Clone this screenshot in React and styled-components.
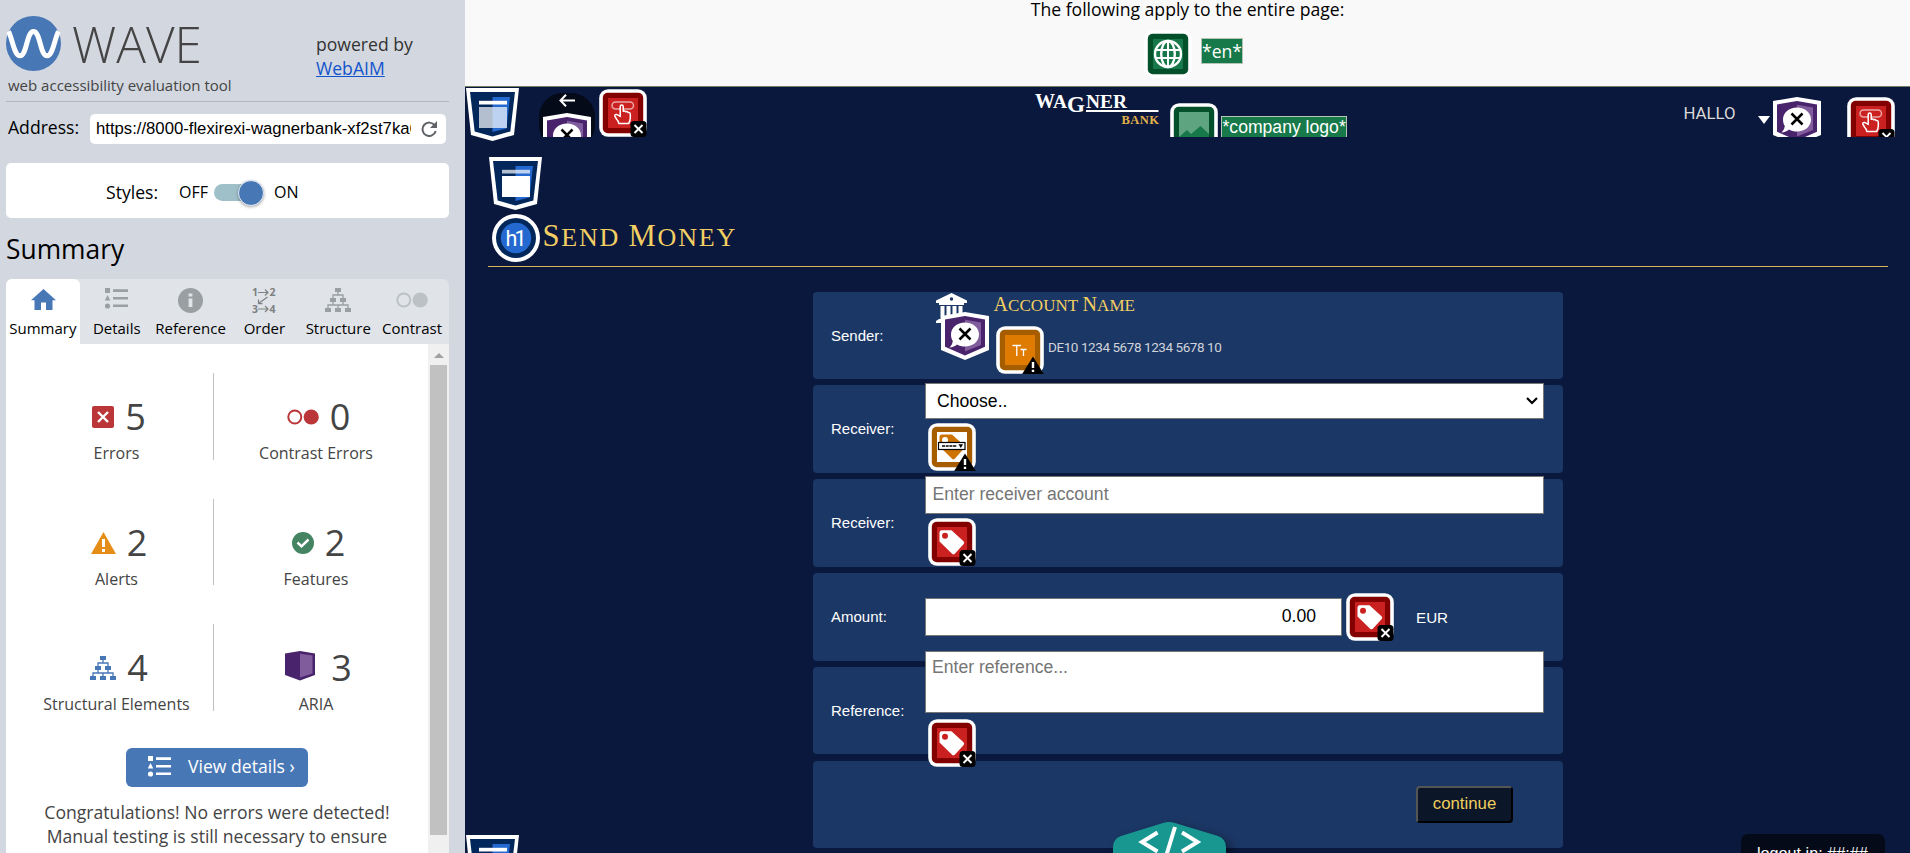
import React from 'react';
import styled, { createGlobalStyle, css } from 'styled-components';

const Global = createGlobalStyle`
  * { box-sizing: border-box; }
  body { margin: 0; overflow: hidden; background: #09183c; }
  h1, h2, p { margin: 0; font-weight: 400; }
  svg { display: block; flex: none; }
`;

const openSans = "'Open Sans', 'Noto Sans', sans-serif";
const arial = "'Liberation Sans', Arial, sans-serif";

const Page = styled.div`
  display: flex;
  height: 853px;
  overflow: hidden;
`;

/* ---------- sidebar ---------- */

const Sidebar = styled.aside`
  width: 465px;
  flex: none;
  padding: 0 16px 0 6px;
  background: #d3d8e0;
  font-family: ${openSans};
  display: flex;
  flex-direction: column;
`;
const BrandHeader = styled.header`
  display: flex;
  height: 102px;
  padding-top: 16px;
  border-bottom: 1px solid #b1b7bd;
`;
const Brand = styled.div`
  width: 310px;
`;
const BrandRow = styled.div`
  display: flex;
  gap: 11px;
  height: 55px;
`;
const BrandName = styled.span`
  font-size: 49.5px;
  font-weight: 300;
  line-height: 56px;
  color: #444;
`;
const Tagline = styled.div`
  padding-left: 2px;
  font-size: 15px;
  line-height: 28px;
  color: #444;
  white-space: nowrap;
`;
const Powered = styled.div`
  padding-top: 16px;
  font-size: 17.6px;
  line-height: 24px;
  color: #333;
  white-space: nowrap;
  a { display: block; color: #1254cc; text-decoration: underline; }
`;
const AddressRow = styled.div`
  display: flex;
  padding: 12px 3px 19px 2px;
`;
const AddressLabel = styled.label`
  width: 82px;
  font-size: 17.6px;
  line-height: 26px;
  color: #000;
`;
const AddressBox = styled.div`
  width: 356px;
  height: 30px;
  padding: 0 9px 0 6px;
  border-radius: 5px;
  background: #fff;
  display: flex;
  align-items: center;
  justify-content: space-between;
`;
const AddressText = styled.span`
  width: 315px;
  overflow: hidden;
  white-space: nowrap;
  font: 16.7px/28px ${arial};
`;
const StylesCard = styled.div`
  display: flex;
  align-items: center;
  height: 55px;
  flex: none;
  padding: 2px 0 0 100px;
  border-radius: 5px;
  background: #fff;
  font-size: 16px;
`;
const StylesLabel = styled.span`
  width: 73px;
  font-size: 17.6px;
`;
const Track = styled.span`
  display: flex;
  align-items: center;
  justify-content: flex-end;
  width: 50px;
  height: 17px;
  margin: 2px 10px 0 6px;
  border-radius: 9px;
  background: #9fc0c9;
`;
const Knob = styled.span`
  width: 26px;
  height: 26px;
  flex: none;
  border-radius: 50%;
  border: 1px solid #e8eef6;
  background: #4877b6;
  box-shadow: 0 1px 3px rgba(0, 0, 0, 0.35);
`;
const SectionTitle = styled.h2`
  margin: 13px 0 12px;
  font-size: 26.4px;
  line-height: 36px;
`;
const Tabs = styled.nav`
  display: grid;
  grid-template-columns: repeat(6, 1fr);
  height: 65px;
  flex: none;
  border-radius: 6px 6px 0 0;
  background: #e0e4e8;
`;
const Tab = styled.div`
  display: flex;
  flex-direction: column;
  align-items: center;
  padding-top: 8px;
  border-radius: 6px 6px 0 0;
  background: ${(p) => (p.$active ? '#fff' : 'transparent')};
  font-size: 15px;
  line-height: 20px;
  white-space: nowrap;
`;
const TabIcon = styled.div`
  display: flex;
  align-items: center;
  height: 26px;
  margin-bottom: 5px;
`;
const Panel = styled.div`
  display: flex;
  flex: 1;
  min-height: 0;
  overflow: hidden;
`;
const PanelBody = styled.div`
  width: 422px;
  padding-top: 29px;
  background: #fff;
  display: flex;
  flex-direction: column;
  align-items: center;
  color: #444;
`;
const StatRow = styled.div`
  display: grid;
  grid-template-columns: 194px 204px;
  grid-template-rows: 86.5px;
  width: 398px;
  height: 86.5px;
  margin: 0 0 39px 4px;
  flex: none;
  &:nth-child(3) { margin-bottom: 37px; }
`;
const Stat = styled.div`
  display: flex;
  flex-direction: column;
  align-items: center;
  padding-top: 24px;
  ${(p) => p.$divided && css`border-right: 1px solid #c0c0c0;`}
`;
const StatTop = styled.div`
  display: flex;
  flex: none;
  align-items: center;
  gap: ${(p) => p.$gap}px;
  height: 40px;
  padding-left: 5px;
  margin-bottom: 5px;
  font-size: 36px;
  line-height: 40px;
`;
const StatLabel = styled.div`
  font-size: 16px;
  line-height: 22px;
  white-space: nowrap;
`;
const DetailsButton = styled.button`
  display: flex;
  align-items: center;
  width: 182px;
  height: 39px;
  flex: none;
  padding: 0 0 2px 22px;
  gap: 17px;
  border: 0;
  border-radius: 6px;
  background: #4877b6;
  color: #fff;
  font: 17.6px ${openSans};
  white-space: nowrap;
`;
const Verdict = styled.p`
  width: 380px;
  margin-top: 13px;
  font-size: 17.6px;
  line-height: 24px;
  text-align: center;
`;
const Scrollbar = styled.div`
  width: 21px;
  background: #f0f0f0;
  display: flex;
  flex-direction: column;
  align-items: center;
`;
const ScrollArrow = styled.div`
  margin: 9px 0 7px;
  border: 5px solid transparent;
  border-top: 0;
  border-bottom-color: #a0a0a0;
`;
const ScrollThumb = styled.div`
  width: 17px;
  height: 470px;
  background: #c1c1c1;
`;

/* ---------- evaluated page ---------- */

const Main = styled.main`
  flex: 1;
  min-width: 0;
  background: #09183c;
  color: #fff;
  font-family: ${arial};
  position: relative;
`;
const Notice = styled.section`
  height: 87px;
  border-bottom: 1px solid #6f7d68;
  background: #f9f9f9;
  color: #000;
  font: 17.6px/24px ${openSans};
  text-align: center;
`;
const NoticeText = styled.div`
  height: 30px;
  line-height: 19px;
`;
const NoticeIcons = styled.div`
  display: flex;
  justify-content: center;
  gap: 9px;
  padding-left: 12px;
`;
const AltTag = styled.span`
  height: ${(p) => p.$h}px;
  padding: 0 ${(p) => p.$px}px;
  border: 1px solid #b4c4b6;
  background: #17794a;
  color: #fff;
  white-space: nowrap;
  font: 17.6px/${(p) => p.$lh}px ${(p) => p.$family};
  margin-top: ${(p) => p.$top}px;
`;
const BankHeader = styled.header`
  display: flex;
  height: 70px;
  padding-left: 1px;
`;
const HeaderClip = styled.div`
  display: flex;
  flex: 1;
  height: 50px;
  overflow: hidden;
  align-items: flex-start;
`;
const BackPill = styled.div`
  position: relative;
  width: 56px;
  height: 56px;
  margin: 6px 4px 0 20px;
  padding-top: 1px;
  border-radius: 24px;
  background: #040a17;
  display: flex;
  justify-content: center;
`;
const BackShield = styled.div`
  position: absolute;
  left: 3.5px;
  top: 20px;
`;
const RedSlot = styled.div`
  margin: ${(p) => p.$m};
`;
const Greeting = styled.span`
  margin: 14px 21px 0 auto;
  width: 53px;
  font: 16.8px/24px Roboto, sans-serif;
  color: #d9d9d9;
`;
const Caret = styled.span`
  margin: 29px 3px 0 0;
  border: 6.5px solid transparent;
  border-top: 8px solid #fff;
  border-bottom: 0;
`;
const Content = styled.section`
  padding: 0 22px 0 23px;
`;
const TitleBar = styled.div`
  display: flex;
  gap: 2.5px;
  height: 57px;
  padding: 4px 0 0 4px;
  border-bottom: 1px solid #d9b452;
`;
const DisplayText = styled.span`
  font-family: 'Liberation Serif', serif;
  text-transform: uppercase;
  color: #f3cf63;
  white-space: pre;
  font-size: ${(p) => p.$size}px;
  letter-spacing: ${(p) => p.$track}px;
  line-height: ${(p) => p.$lh}px;
`;
const Word = styled.span`
  display: inline-block;
  &::first-letter { font-size: 1.18em; }
`;
const Form = styled.div`
  width: 750px;
  margin: 24.6px auto 0;
  display: flex;
  flex-direction: column;
  gap: 6.2px;
`;
const Row = styled.div`
  display: flex;
  height: 87.6px;
  padding: 0 19px 0 18px;
  border-radius: 4px;
  background: #1b3765;
`;
const RowLabel = styled.label`
  width: 94px;
  flex: none;
  font-size: 15px;
  line-height: 87px;
`;
const Field = styled.div`
  display: flex;
  flex-direction: ${(p) => (p.$inline ? 'row' : 'column')};
  width: 619px;
  margin-top: ${(p) => p.$top}px;
`;
const Control = styled.div`
  position: relative;
  z-index: 1;
  display: flex;
  flex: none;
  align-items: flex-start;
  justify-content: ${(p) => (p.$right ? 'flex-end' : 'space-between')};
  width: ${(p) => p.$w || 619}px;
  height: ${(p) => p.$h}px;
  margin-top: ${(p) => p.$drop || 0}px;
  padding: ${(p) => p.$pad};
  border: 1px solid #767676;
  background: #fff;
  color: ${(p) => (p.$hint ? '#757575' : '#000')};
  font-size: 17.6px;
  line-height: 22px;
`;
const MarkSlot = styled.div`
  position: relative;
  z-index: 1;
  height: 48px;
  margin: ${(p) => p.$m};
`;
const Currency = styled.span`
  font-size: 15.2px;
  line-height: 49px;
`;
const Sender = styled.div`
  display: flex;
  gap: 4px;
  padding-left: 10.5px;
`;
const BankMark = styled.div`
  position: relative;
  width: 54px;
  padding-top: 1px;
`;
const BankShield = styled.div`
  position: absolute;
  left: 5px;
  top: 20.5px;
`;
const AccountInfo = styled.div`
  display: flex;
  flex-direction: column;
`;
const IbanRow = styled.div`
  display: flex;
  gap: 4px;
  padding-left: 2.5px;
  margin-top: 8px;
`;
const Iban = styled.span`
  font: 13.5px/41px Roboto, sans-serif;
  padding-top: 1px;
  letter-spacing: -0.43px;
  color: #d0d3d9;
  white-space: nowrap;
`;
const SubmitButton = styled.button`
  width: 97px;
  height: 37px;
  margin: 25px 31px 0 auto;
  padding: 0 0 1px;
  border: 2px solid;
  border-color: #555 #000 #000 #555;
  border-radius: 4px;
  background: #0b1628;
  color: #f0cd5f;
  font: 16.8px ${arial};
`;
const Floating = styled.div`
  position: absolute;
  z-index: 2;
  left: ${(p) => p.$x}px;
  top: ${(p) => p.$y}px;
`;
const LogoutTimer = styled(Floating)`
  width: 144px;
  height: 50px;
  padding: 9px 0 0 16px;
  border-radius: 7px;
  background: #040a17;
  font-size: 16.2px;
  line-height: 20px;
  white-space: nowrap;
`;

/* ---------- icons ---------- */

const WaveLogo = () => (
  <svg width="55" height="55" viewBox="0 0 55 55">
    <circle cx="27.5" cy="27.5" r="27.5" fill="#4877b6" />
    <path d="M2.5 15.5C6 21 8 39.8 14 39.8C21 39.8 20.500 15.500 27.500 15.500C34.500 15.500 34 39.800 41 39.800C47 39.800 49 21 52.500 15.500" fill="none" stroke="#fff" strokeWidth="5" />
  </svg>
);
const Reload = () => (
  <svg width="16" height="16" viewBox="0 0 16 16">
    <path d="M13.800 4.600A6.700 6.700 0 1 0 14.700 10" fill="none" stroke="#5f6368" strokeWidth="2" />
    <path d="M16 0V7H9Z" fill="#5f6368" />
  </svg>
);
const Home = () => (
  <svg width="25" height="21" viewBox="0 0 25 21" style={{ marginLeft: 1, marginTop: -2 }}>
    <path d="M12.500 0L25 11.300H21.500V21H15V13.500H10V21H3.500V11.300H0Z" fill="#4877b6" />
  </svg>
);
const ListIcon = ({ color, y = 0 }) => (
  <svg width="23" height="21" viewBox="0 0 23 21" style={{ marginTop: y }}>
    <g fill={color}>
      <path d="M0 0h5v5H0zM2.500 7L5.300 12.500H-.3Z" />
      <circle cx="2.500" cy="18" r="2.600" />
      <path d="M8 1.300h15v2.600H8zM8 9h15v2.600H8zM8 16.400h15v2.600H8z" />
    </g>
  </svg>
);
const Info = () => (
  <svg width="25" height="25" viewBox="0 0 25 25">
    <circle cx="12.500" cy="12.500" r="12.500" fill="#9a9fa2" />
    <path d="M10.600 5.500h3.800v3h-3.800zM10.600 10.500h3.800v8.500h-3.800z" fill="#e0e4e8" />
  </svg>
);
const Order = () => (
  <svg width="24" height="25" viewBox="0 0 24 25">
    <g fill="#7d8183" fontFamily={openSans} fontWeight="700" fontSize="10.500">
      <text x="0" y="8">1</text><text x="17.500" y="8">2</text>
      <text x="0" y="24.500">3</text><text x="17.500" y="24.500">4</text>
    </g>
    <path d="M6 4.500H16M13 1.500L16 4.500L13 7.500M6 21H16M13 18L16 21L13 24M15.500 9L6.500 15.500M6.500 11.500V15.700H10.500" fill="none" stroke="#7d8183" strokeWidth="1.200" />
  </svg>
);
const Tree = ({ color }) => (
  <svg width="26" height="24" viewBox="0 0 26 24">
    <path d="M10 0h6v4h-6zM5 10h6v4H5zM15 10h6v4h-6zM0 20h6v4H0zM10 20h6v4h-6zM20 20h6v4h-6z" fill={color} />
    <path d="M13 4V7M8 10V7H18V10M8 14V17M18 14V17M3 20V17H23V20M13 17V20" fill="none" stroke={color} strokeWidth="1.300" />
  </svg>
);
const ContrastIcon = ({ color }) => (
  <svg width="32" height="16" viewBox="0 0 32 16">
    <circle cx="7.800" cy="8" r="6.500" fill="none" stroke={color} strokeWidth="2" />
    <circle cx="24.200" cy="8" r="7.600" fill={color} />
  </svg>
);
const ErrorIcon = () => (
  <svg width="22" height="22" viewBox="0 0 22 22">
    <rect width="22" height="22" rx="2" fill="#bb3638" />
    <path d="M6 6L16 16M16 6L6 16" stroke="#fff" strokeWidth="2.400" />
  </svg>
);
const AlertIcon = () => (
  <svg width="25" height="22" viewBox="0 0 25 22">
    <path d="M12.500 0L25 22H0Z" fill="#e48e18" />
    <path d="M11 7h3v8h-3zM11 17h3v3h-3z" fill="#fff" />
  </svg>
);
const CheckIcon = () => (
  <svg width="22" height="22" viewBox="0 0 22 22">
    <circle cx="11" cy="11" r="11" fill="#448462" />
    <path d="M5.500 10.500L9.500 14.300L16.500 7.500" fill="none" stroke="#fff" strokeWidth="2.500" />
  </svg>
);
const AriaIcon = () => (
  <svg width="30" height="30" viewBox="0 0 30 30" style={{ marginTop: -5 }}>
    <path d="M0 2.500L15 0L30 2.500V24L15 29.500L0 24Z" fill="#49236c" />
    <path d="M15 2.800L27.500 4.500V22.500L15 26.500Z" fill="#805c9c" />
  </svg>
);
const BlueShield = ({ nav }) => (
  <svg width="53" height="53" viewBox="0 0 53 53">
    <path d="M0 0H53L48 47L26.500 53L5 47Z" fill="#fff" />
    <path d="M4 4H49L44.300 43.500L26.500 48.500L8.700 43.500Z" fill="#02275a" />
    <path d="M26.500 9H44L40.500 40.500L26.500 44Z" fill="#2469cf" />
    <rect x="13" y="12.800" width="28" height="3.700" fill="#fff" opacity={nav ? 1 : 0.7} />
    <rect x="13" y="19" width="28" height="21" fill="#fff" opacity={nav ? 0.7 : 1} />
  </svg>
);
const PurpleShield = () => (
  <svg width="48" height="48" viewBox="0 0 48 48">
    <path d="M0 4L24 0L48 4V38L24 48L0 38Z" fill="#fff" />
    <path d="M4 7.500L24 4L44 7.500V34.800L24 43.500L4 34.800Z" fill="#49236c" />
    <path d="M24 7.800L40 10.500V33L24 39.500Z" fill="#805c9c" />
    <path d="M24 10.500C32 10.500 38 15.500 38 22.500S32 34.500 24 34.500C21 34.500 18.500 34 16 32.500C14 34.300 11.500 35.200 8.500 35.500C10.500 33.500 11.500 31.500 11.800 29C10.500 27 10 25 10 22.500C10 15.500 16 10.500 24 10.500Z" fill="#fff" />
    <path d="M18.500 16.500L29.500 27.500M29.500 16.500L18.500 27.500" stroke="#000" strokeWidth="2.500" />
  </svg>
);
const tileColors = {
  red: ['#820000', '#cb2020'],
  green: ['#04502b', '#17794a'],
  orange: ['#a65d00', '#de7b00'],
};
const Tile = ({ tone, inner, children }) => (
  <svg width="48" height="48" viewBox="0 0 48 48">
    <rect x=".2" y=".2" width="47.600" height="47.600" rx="9" fill="#fff" />
    <rect x="3.800" y="3.800" width="40.400" height="40.400" rx="5" fill={tileColors[tone][0]} />
    <rect x="9" y="9" width="30" height="30" fill={inner || tileColors[tone][1]} />
    {children}
  </svg>
);
const CrossBadge = () => (
  <g>
    <rect x="31.500" y="32" width="16" height="16" rx="3.500" fill="#000" />
    <path d="M35.500 36L43.500 44M43.500 36L35.500 44" stroke="#fff" strokeWidth="1.900" />
  </g>
);
const WarnBadge = () => (
  <g>
    <path d="M37 30.500L47.800 48H26.200Z" fill="#000" />
    <path d="M35.800 36h2.400v6h-2.400zM35.800 43.700h2.400v2.300h-2.400z" fill="#fff" />
  </g>
);
const TagTile = () => (
  <Tile tone="red">
    <path d="M11.500 14.500Q11.500 12.200 13.800 12.200L23.500 12.200L35.500 23.200Q37 24.800 35.500 26.200L27 35.500Q25.500 37.200 23.800 35.500L11.500 23.500Z" fill="#fff" />
    <circle cx="17" cy="17.700" r="3" fill="#cb2020" />
    <CrossBadge />
  </Tile>
);
const ButtonTile = () => (
  <Tile tone="red">
    <rect x="13" y="13" width="21.500" height="7" rx="3.500" fill="none" stroke="#eba5a5" strokeWidth="1.500" />
    <path d="M21.200 27V17.500Q21.200 16 22.700 16T24.200 17.500V22.300Q26 21.300 26.800 22.800Q28.300 22 29 23.500Q31.300 23 31.300 25.500V29Q31.300 31.500 29.800 34.400H19.800Q19.500 32 17.500 30L15.800 27.200Q15.600 25.200 17.500 25.400Q19 25.600 21.200 27.500Z" fill="#cb2020" stroke="#fff" strokeWidth="1.500" strokeLinejoin="round" />
    <CrossBadge />
  </Tile>
);
const TextSizeTile = () => (
  <Tile tone="orange">
    <path d="M16.500 19.500H25M20.800 19.500V30M24.500 23.500H30.500M27.500 23.500V30" stroke="#fff" strokeWidth="1.300" fill="none" />
    <WarnBadge />
  </Tile>
);
const SelectTile = () => (
  <Tile tone="orange" inner="#fff">
    <path d="M11.500 14Q11.500 11.500 14 11.500H24L35.500 22Q37 24 35.500 26L27 35.500Q25.500 37.200 23.800 35.500L11.500 23.500Z" fill="#ce7300" />
    <circle cx="17" cy="17" r="3" fill="#fff" />
    <rect x="10.500" y="19.500" width="26.500" height="7" fill="#fff" stroke="#000" strokeWidth="1.200" />
    <path d="M14 23H29" stroke="#000" strokeWidth="1.400" strokeDasharray="3 .7" />
    <path d="M30.500 21.300H35L32.800 25Z" fill="#000" />
    <WarnBadge />
  </Tile>
);
const LanguageTile = () => (
  <Tile tone="green">
    <g fill="none" stroke="#fff" strokeWidth="2.400">
      <circle cx="24" cy="24" r="13" />
      <ellipse cx="24" cy="24" rx="6.800" ry="13" />
      <path d="M24 11V37M12 20H36M12 28H36" strokeWidth="2" />
    </g>
  </Tile>
);
const ImageTile = () => (
  <Tile tone="green">
    <rect x="9" y="9" width="30" height="30" fill="#5fa481" />
    <path d="M9 34L17 27L21 31L30.500 23L39 31V39H9Z" fill="#17794a" />
  </Tile>
);
const HeadingMark = () => (
  <svg width="48" height="48" viewBox="0 0 48 48">
    <circle cx="24" cy="24" r="24" fill="#fff" />
    <circle cx="24" cy="24" r="20" fill="#02275a" />
    <circle cx="24" cy="24" r="15.200" fill="#2469cf" />
    <text x="24" y="32.300" textAnchor="middle" fill="#fff" fontFamily="Roboto, sans-serif" fontSize="21.500" textLength="21">h1</text>
  </svg>
);
const BackArrow = () => (
  <svg width="16" height="13" viewBox="0 0 16 13">
    <path d="M16 6.500H1.500M7 .8L1.500 6.500L7 12.200" fill="none" stroke="#fff" strokeWidth="2" />
  </svg>
);
const BankIcon = () => (
  <svg width="32" height="32" viewBox="0 0 32 32">
    <path d="M15.500 0L31 7.500V10H28V12H3V10H0V7.500Z" fill="#fff" />
    <circle cx="15.500" cy="6" r="1.700" fill="#1b3765" />
    <path d="M4.500 13h4v13h-4zM10.500 13h4v13h-4zM16.500 13h4v13h-4zM22.500 13h4v13h-4zM3 26H28V28H31V30H0V28Z" fill="#fff" />
  </svg>
);
const BankLogo = () => (
  <svg width="126" height="42" viewBox="0 0 126 42">
    <g fontFamily="'Liberation Serif', serif" fontWeight="700" fill="#fff">
      <text x="0" y="21" fontSize="22" textLength="20" lengthAdjust="spacingAndGlyphs">W</text>
      <text x="18" y="21" fontSize="18" textLength="14" lengthAdjust="spacingAndGlyphs">A</text>
      <text x="32" y="24.500" fontSize="24" textLength="18" lengthAdjust="spacingAndGlyphs">G</text>
      <text x="51" y="21" fontSize="19" textLength="41" lengthAdjust="spacingAndGlyphs">NER</text>
      <text x="86.500" y="37" fontSize="12.500" textLength="37.500" fill="#e3b04b">BANK</text>
    </g>
    <rect x="51" y="23" width="72.500" height="2" fill="#fff" />
  </svg>
);
const Chevron = () => (
  <svg width="12" height="8" viewBox="0 0 12 8" style={{ marginTop: 7 }}>
    <path d="M1 1L6 6L11 1" fill="none" stroke="#000" strokeWidth="2.200" />
  </svg>
);
const CodeBadge = () => (
  <svg width="140" height="60" viewBox="0 0 140 60" style={{ filter: 'drop-shadow(5px 4px 5px rgba(0,0,0,.4))' }}>
    <path d="M0 60V25Q0 17 8 14L50 1Q56 -1 62 1L105 14Q113 17 113 25V60Z" fill="#189690" />
    <path d="M44.500 10.500L29 20L44.500 29.500M69 10.500L84.500 20L69 29.500M62 5L52.500 36" fill="none" stroke="#fff" strokeWidth="4" />
  </svg>
);

/* ---------- composition ---------- */

const tabs = [
  ['Summary', <Home key="i" />],
  ['Details', <ListIcon key="i" color="#9a9fa2" y={-4} />],
  ['Reference', <Info key="i" />],
  ['Order', <Order key="i" />],
  ['Structure', <Tree key="i" color="#9a9fa2" />],
  ['Contrast', <ContrastIcon key="i" color="#bcc1c5" />],
];
const stats = [
  [['Errors', 5, <ErrorIcon key="i" />, 11], ['Contrast Errors', 0, <ContrastIcon key="i" color="#bb3638" />, 11]],
  [['Alerts', 2, <AlertIcon key="i" />, 11], ['Features', 2, <CheckIcon key="i" />, 11]],
  [['Structural Elements', 4, <Tree key="i" color="#4877b6" />, 11], ['ARIA', 3, <AriaIcon key="i" />, 16]],
];

const Display = ({ as, text, size, track, lh }) => (
  <DisplayText as={as} $size={size} $track={track} $lh={lh}>
    {text.split(' ').map((w, i) => (
      <React.Fragment key={w}>{i > 0 && ' '}<Word>{w}</Word></React.Fragment>
    ))}
  </DisplayText>
);

function WavePanel() {
  return (
    <Sidebar>
      <BrandHeader>
        <Brand>
          <BrandRow><WaveLogo /><BrandName>WAVE</BrandName></BrandRow>
          <Tagline>web accessibility evaluation tool</Tagline>
        </Brand>
        <Powered>powered by<a>WebAIM</a></Powered>
      </BrandHeader>
      <AddressRow>
        <AddressLabel>Address:</AddressLabel>
        <AddressBox>
          <AddressText>https://8000-flexirexi-wagnerbank-xf2st7ka6</AddressText>
          <Reload />
        </AddressBox>
      </AddressRow>
      <StylesCard>
        <StylesLabel>Styles:</StylesLabel>OFF<Track><Knob /></Track>ON
      </StylesCard>
      <SectionTitle>Summary</SectionTitle>
      <Tabs>
        {tabs.map(([name, icon], i) => (
          <Tab key={name} $active={i === 0}><TabIcon>{icon}</TabIcon>{name}</Tab>
        ))}
      </Tabs>
      <Panel>
        <PanelBody>
          {stats.map((row, r) => (
            <StatRow key={r}>
              {row.map(([label, n, icon, gap], i) => (
                <Stat key={label} $divided={i === 0}>
                  <StatTop $gap={gap}>{icon}<span>{n}</span></StatTop>
                  <StatLabel>{label}</StatLabel>
                </Stat>
              ))}
            </StatRow>
          ))}
          <DetailsButton><ListIcon color="#fff" />View details ›</DetailsButton>
          <Verdict>Congratulations! No errors were detected!<br />Manual testing is still necessary to ensure</Verdict>
        </PanelBody>
        <Scrollbar><ScrollArrow /><ScrollThumb /></Scrollbar>
      </Panel>
    </Sidebar>
  );
}

export default function App() {
  return (
    <Page>
      <Global />
      <WavePanel />
      <Main>
        <Notice>
          <NoticeText>The following apply to the entire page:</NoticeText>
          <NoticeIcons>
            <LanguageTile />
            <AltTag $h={26} $lh={25} $top={8} $px={0} $family={openSans}>*en*</AltTag>
          </NoticeIcons>
        </Notice>
        <BankHeader>
          <RedSlot $m="1px 0 0"><BlueShield nav /></RedSlot>
          <HeaderClip>
            <BackPill><BackArrow /><BackShield><PurpleShield /></BackShield></BackPill>
            <RedSlot $m="1.500px 388px 0 0"><ButtonTile /></RedSlot>
            <BankLogo />
            <RedSlot $m="16px 3px 0 9px"><ImageTile /></RedSlot>
            <AltTag $h={30} $lh={20} $top={29} $px={0.5} $family={arial}>*company logo*</AltTag>
            <Greeting>HALLO</Greeting>
            <Caret />
            <RedSlot $m="9.500px 26.500px 0 0"><PurpleShield /></RedSlot>
            <RedSlot $m="10px 15px 0 0"><ButtonTile /></RedSlot>
          </HeaderClip>
        </BankHeader>
        <Content>
          <RedSlot $m="0 0 0 1px"><BlueShield /></RedSlot>
          <TitleBar>
            <HeadingMark />
            <Display as="h1" text="Send Money" size={26} track={1.8} lh={45} />
          </TitleBar>
          <Form>
            <Row>
              <RowLabel>Sender:</RowLabel>
              <Sender>
                <BankMark><BankIcon /><BankShield><PurpleShield /></BankShield></BankMark>
                <AccountInfo>
                  <Display text="Account Name" size={17} track={0.05} lh={24} />
                  <IbanRow><TextSizeTile /><Iban>DE10 1234 5678 1234 5678 10</Iban></IbanRow>
                </AccountInfo>
              </Sender>
            </Row>
            <Row>
              <RowLabel>Receiver:</RowLabel>
              <Field $top={-2}>
                <Control $h={36} $pad="5.500px 5px 0 11px">Choose..<Chevron /></Control>
                <MarkSlot $m="3.500px 0 0 3px"><SelectTile /></MarkSlot>
              </Field>
            </Row>
            <Row>
              <RowLabel>Receiver:</RowLabel>
              <Field $top={-3}>
                <Control $h={38} $pad="6px 6.500px" $hint>Enter receiver account</Control>
                <MarkSlot $m="3.500px 0 0 3px"><TagTile /></MarkSlot>
              </Field>
            </Row>
            <Row>
              <RowLabel>Amount:</RowLabel>
              <Field $top={20} $inline>
                <Control $w={417} $h={38} $pad="6.500px 25px" $right $drop={4.6}>0.00</Control>
                <MarkSlot $m="0 22px 0 4px"><TagTile /></MarkSlot>
                <Currency>EUR</Currency>
              </Field>
            </Row>
            <Row>
              <RowLabel>Reference:</RowLabel>
              <Field $top={-16}>
                <Control $h={62} $pad="4.500px 6px" $hint>Enter reference...</Control>
                <MarkSlot $m="6px 0 0 3px"><TagTile /></MarkSlot>
              </Field>
            </Row>
            <Row><SubmitButton>continue</SubmitButton></Row>
          </Form>
        </Content>
        <Floating $x={1} $y={835}><BlueShield nav /></Floating>
        <Floating $x={648} $y={822}><CodeBadge /></Floating>
        <LogoutTimer $x={1276} $y={834}>logout in: ##:##</LogoutTimer>
      </Main>
    </Page>
  );
}
